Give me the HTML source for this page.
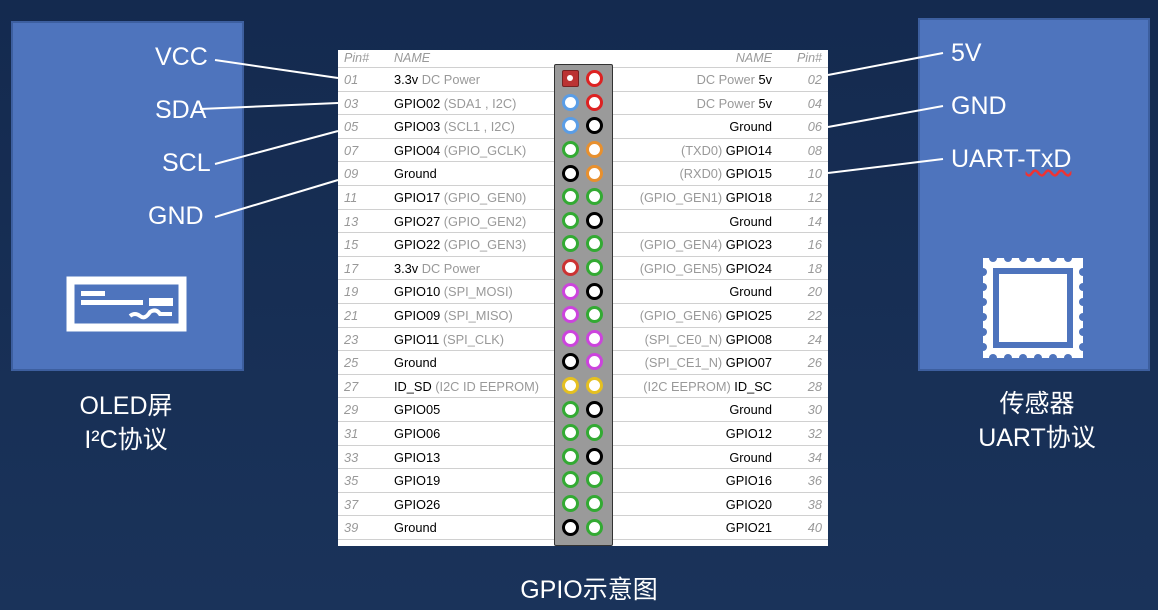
<!DOCTYPE html>
<html><head><meta charset="utf-8"><style>
*{margin:0;padding:0;box-sizing:border-box}
body{width:1158px;height:610px;overflow:hidden;background:linear-gradient(180deg,#142a4f,#1a335a);font-family:"Liberation Sans","Noto Sans CJK SC",sans-serif;position:relative}
.box{position:absolute;background:#4e74bd;border:2px solid #3d5f9f}
.lbl{position:absolute;color:#fff;font-size:25px;line-height:30px;font-family:"Liberation Sans","Noto Sans CJK SC",sans-serif}
.cap{position:absolute;color:#fff;font-size:25px;line-height:34px;text-align:center;font-family:"Liberation Sans","Noto Sans CJK SC",sans-serif}
#tbl{position:absolute;left:338px;top:50px;width:490px;height:496px;background:#fff}
.row{position:absolute;left:0;width:490px;height:23.6px;border-bottom:1.5px solid #d0d0d0;font-size:12.8px;color:#000}
.row span{position:absolute;top:4px;white-space:nowrap}
.pl{left:6px;color:#999;font-style:italic}
.nl{left:56px}
.nr{right:56px;text-align:right}
.pr{right:6px;color:#999;font-style:italic}
g{color:#999}
#hdr{position:absolute;left:0;top:0;width:490px;height:18px;font-size:12.5px;color:#999;font-style:italic;border-bottom:1.5px solid #d0d0d0}
#hdr span{position:absolute;top:1px}
#conn{position:absolute;left:554px;top:64px;width:59px;height:482px;background:#9a9a9a;border:1.5px solid #333;border-radius:2px}
.p{position:absolute;width:17px;height:17px;margin:-1px 0 0 -1px;border-radius:50%;border:3.5px solid;background:#fff}
</style></head><body>
<div class="box" style="left:11px;top:21px;width:233px;height:350px"></div>
<div class="box" style="left:918px;top:18px;width:232px;height:353px"></div>

<div class="lbl" style="left:155px;top:42px">VCC</div>
<div class="lbl" style="left:155px;top:95px">SDA</div>
<div class="lbl" style="left:162px;top:148px">SCL</div>
<div class="lbl" style="left:148px;top:201px">GND</div>
<div class="lbl" style="left:951px;top:38px">5V</div>
<div class="lbl" style="left:951px;top:91px">GND</div>
<div class="lbl" style="left:951px;top:144px">UART-<span style="text-decoration:underline wavy #e33">TxD</span></div>

<svg style="position:absolute;left:0;top:0" width="1158" height="610">
<g stroke="#fff" stroke-width="2" fill="none">
<line x1="215" y1="60" x2="338" y2="78"/>
<line x1="200" y1="109" x2="338" y2="103"/>
<line x1="215" y1="164" x2="338" y2="131"/>
<line x1="215" y1="217" x2="338" y2="180"/>
<line x1="828" y1="75" x2="943" y2="53"/>
<line x1="828" y1="127" x2="943" y2="106"/>
<line x1="828" y1="173" x2="943" y2="159"/>
</g>
<rect x="70.5" y="280.5" width="112" height="47" fill="none" stroke="#fff" stroke-width="8"/>
<rect x="81" y="291" width="24" height="5" fill="#fff"/>
<rect x="81" y="300" width="62" height="5" fill="#fff"/>
<rect x="149" y="298" width="24" height="8" fill="#fff"/>
<path d="M130 316 q5 -4 10 0 q5 4 10 -4 q6 -4 10 2 l12 0" stroke="#fff" stroke-width="4" fill="none"/>
<path d="M983 258 h100 v100 h-100 z" fill="#fff"/>
<g fill="#4e74bd">
<circle cx="993" cy="258" r="4"/><circle cx="1008" cy="258" r="4"/><circle cx="1023" cy="258" r="4"/><circle cx="1038" cy="258" r="4"/><circle cx="1053" cy="258" r="4"/><circle cx="1068" cy="258" r="4"/>
<circle cx="993" cy="358" r="4"/><circle cx="1008" cy="358" r="4"/><circle cx="1023" cy="358" r="4"/><circle cx="1038" cy="358" r="4"/><circle cx="1053" cy="358" r="4"/><circle cx="1068" cy="358" r="4"/>
<circle cx="983" cy="272" r="4"/><circle cx="983" cy="287" r="4"/><circle cx="983" cy="302" r="4"/><circle cx="983" cy="317" r="4"/><circle cx="983" cy="332" r="4"/><circle cx="983" cy="347" r="4"/>
<circle cx="1083" cy="272" r="4"/><circle cx="1083" cy="287" r="4"/><circle cx="1083" cy="302" r="4"/><circle cx="1083" cy="317" r="4"/><circle cx="1083" cy="332" r="4"/><circle cx="1083" cy="347" r="4"/>
<rect x="993" y="268" width="80" height="80"/>
</g>
<rect x="999" y="274" width="68" height="68" fill="#fff"/>
</svg>

<div class="cap" style="left:36px;top:389px;width:180px">OLED屏<br>I²C协议</div>
<div class="cap" style="left:947px;top:387px;width:180px">传感器<br>UART协议</div>
<div class="cap" style="left:489px;top:573px;width:200px">GPIO示意图</div>

<div id="tbl">
<div id="hdr"><span style="left:6px">Pin#</span><span style="left:56px">NAME</span><span style="right:56px">NAME</span><span style="right:6px">Pin#</span></div>
<div class="row" style="top:18px"><span class="pl">01</span><span class="nl">3.3v <g>DC Power</g></span><span class="nr"><g>DC Power</g> 5v</span><span class="pr">02</span></div>
<div class="row" style="top:41.6px"><span class="pl">03</span><span class="nl">GPIO02 <g>(SDA1 , I2C)</g></span><span class="nr"><g>DC Power</g> 5v</span><span class="pr">04</span></div>
<div class="row" style="top:65.2px"><span class="pl">05</span><span class="nl">GPIO03 <g>(SCL1 , I2C)</g></span><span class="nr">Ground</span><span class="pr">06</span></div>
<div class="row" style="top:88.8px"><span class="pl">07</span><span class="nl">GPIO04 <g>(GPIO_GCLK)</g></span><span class="nr"><g>(TXD0)</g> GPIO14</span><span class="pr">08</span></div>
<div class="row" style="top:112.4px"><span class="pl">09</span><span class="nl">Ground</span><span class="nr"><g>(RXD0)</g> GPIO15</span><span class="pr">10</span></div>
<div class="row" style="top:136px"><span class="pl">11</span><span class="nl">GPIO17 <g>(GPIO_GEN0)</g></span><span class="nr"><g>(GPIO_GEN1)</g> GPIO18</span><span class="pr">12</span></div>
<div class="row" style="top:159.6px"><span class="pl">13</span><span class="nl">GPIO27 <g>(GPIO_GEN2)</g></span><span class="nr">Ground</span><span class="pr">14</span></div>
<div class="row" style="top:183.2px"><span class="pl">15</span><span class="nl">GPIO22 <g>(GPIO_GEN3)</g></span><span class="nr"><g>(GPIO_GEN4)</g> GPIO23</span><span class="pr">16</span></div>
<div class="row" style="top:206.8px"><span class="pl">17</span><span class="nl">3.3v <g>DC Power</g></span><span class="nr"><g>(GPIO_GEN5)</g> GPIO24</span><span class="pr">18</span></div>
<div class="row" style="top:230.4px"><span class="pl">19</span><span class="nl">GPIO10 <g>(SPI_MOSI)</g></span><span class="nr">Ground</span><span class="pr">20</span></div>
<div class="row" style="top:254px"><span class="pl">21</span><span class="nl">GPIO09 <g>(SPI_MISO)</g></span><span class="nr"><g>(GPIO_GEN6)</g> GPIO25</span><span class="pr">22</span></div>
<div class="row" style="top:277.6px"><span class="pl">23</span><span class="nl">GPIO11 <g>(SPI_CLK)</g></span><span class="nr"><g>(SPI_CE0_N)</g> GPIO08</span><span class="pr">24</span></div>
<div class="row" style="top:301.2px"><span class="pl">25</span><span class="nl">Ground</span><span class="nr"><g>(SPI_CE1_N)</g> GPIO07</span><span class="pr">26</span></div>
<div class="row" style="top:324.8px"><span class="pl">27</span><span class="nl">ID_SD <g>(I2C ID EEPROM)</g></span><span class="nr"><g>(I2C EEPROM)</g> ID_SC</span><span class="pr">28</span></div>
<div class="row" style="top:348.4px"><span class="pl">29</span><span class="nl">GPIO05</span><span class="nr">Ground</span><span class="pr">30</span></div>
<div class="row" style="top:372px"><span class="pl">31</span><span class="nl">GPIO06</span><span class="nr">GPIO12</span><span class="pr">32</span></div>
<div class="row" style="top:395.6px"><span class="pl">33</span><span class="nl">GPIO13</span><span class="nr">Ground</span><span class="pr">34</span></div>
<div class="row" style="top:419.2px"><span class="pl">35</span><span class="nl">GPIO19</span><span class="nr">GPIO16</span><span class="pr">36</span></div>
<div class="row" style="top:442.8px"><span class="pl">37</span><span class="nl">GPIO26</span><span class="nr">GPIO20</span><span class="pr">38</span></div>
<div class="row" style="top:466.4px"><span class="pl">39</span><span class="nl">Ground</span><span class="nr">GPIO21</span><span class="pr">40</span></div>
</div>

<div id="conn"></div>
<div style="position:absolute;left:562px;top:70px;width:17px;height:17px;background:#b33;border:1.5px solid #722;border-radius:2px"><div style="position:absolute;left:4px;top:4px;width:6px;height:6px;background:#fff;border-radius:50%"></div></div>
<div class="p" style="left:587px;top:71px;border-color:#d22"></div>
<div class="p" style="left:563px;top:95px;border-color:#5a9de6"></div><div class="p" style="left:587px;top:95px;border-color:#d22"></div>
<div class="p" style="left:563px;top:118px;border-color:#5a9de6"></div><div class="p" style="left:587px;top:118px;border-color:#000"></div>
<div class="p" style="left:563px;top:142px;border-color:#3a3"></div><div class="p" style="left:587px;top:142px;border-color:#e8902e"></div>
<div class="p" style="left:563px;top:166px;border-color:#000"></div><div class="p" style="left:587px;top:166px;border-color:#e8902e"></div>
<div class="p" style="left:563px;top:189px;border-color:#3a3"></div><div class="p" style="left:587px;top:189px;border-color:#3a3"></div>
<div class="p" style="left:563px;top:213px;border-color:#3a3"></div><div class="p" style="left:587px;top:213px;border-color:#000"></div>
<div class="p" style="left:563px;top:236px;border-color:#3a3"></div><div class="p" style="left:587px;top:236px;border-color:#3a3"></div>
<div class="p" style="left:563px;top:260px;border-color:#c33"></div><div class="p" style="left:587px;top:260px;border-color:#3a3"></div>
<div class="p" style="left:563px;top:284px;border-color:#c4d"></div><div class="p" style="left:587px;top:284px;border-color:#000"></div>
<div class="p" style="left:563px;top:307px;border-color:#c4d"></div><div class="p" style="left:587px;top:307px;border-color:#3a3"></div>
<div class="p" style="left:563px;top:331px;border-color:#c4d"></div><div class="p" style="left:587px;top:331px;border-color:#c4d"></div>
<div class="p" style="left:563px;top:354px;border-color:#000"></div><div class="p" style="left:587px;top:354px;border-color:#c4d"></div>
<div class="p" style="left:563px;top:378px;border-color:#e5c020"></div><div class="p" style="left:587px;top:378px;border-color:#e5c020"></div>
<div class="p" style="left:563px;top:402px;border-color:#3a3"></div><div class="p" style="left:587px;top:402px;border-color:#000"></div>
<div class="p" style="left:563px;top:425px;border-color:#3a3"></div><div class="p" style="left:587px;top:425px;border-color:#3a3"></div>
<div class="p" style="left:563px;top:449px;border-color:#3a3"></div><div class="p" style="left:587px;top:449px;border-color:#000"></div>
<div class="p" style="left:563px;top:472px;border-color:#3a3"></div><div class="p" style="left:587px;top:472px;border-color:#3a3"></div>
<div class="p" style="left:563px;top:496px;border-color:#3a3"></div><div class="p" style="left:587px;top:496px;border-color:#3a3"></div>
<div class="p" style="left:563px;top:520px;border-color:#000"></div><div class="p" style="left:587px;top:520px;border-color:#3a3"></div>
</body></html>
